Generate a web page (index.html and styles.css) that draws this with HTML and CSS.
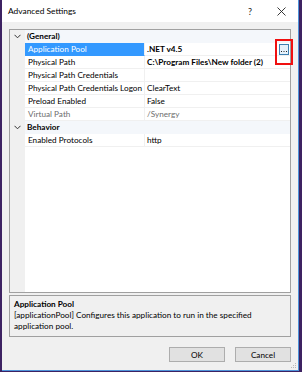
FILE: index.html
```html
<!DOCTYPE html>
<html lang="en">

<head>
  <meta charset="UTF-8">
  <meta name="viewport" content="width=device-width, initial-scale=1.0">
  <title>Advanced Settings</title>

  <link rel="stylesheet" href="styles.css">
</head>

<body>
  <div class="frame">
    <div class="dialog">
      <!-- title bar -->
      <div class="titlebar">
        <span class="title">Advanced Settings</span>
        <span class="tb-btn help">?</span>
        <span class="tb-btn close">
          <svg width="9" height="9" viewBox="0 0 9 9">
            <path d="M0.5 0.5 L8.5 8.5 M8.5 0.5 L0.5 8.5" stroke="#222" stroke-width="0.9" fill="none" />
          </svg>
        </span>
      </div>

      <div class="content">
        <!-- property grid -->
        <div class="grid">
          <div class="row category">
            <div class="gutter">
              <svg width="7" height="5" viewBox="0 0 7 5">
                <polyline points="0.5,0.8 3.5,3.8 6.5,0.8" stroke="#333" stroke-width="1" fill="none" />
              </svg>
            </div>
            <div class="cat-name">(General)</div>
          </div>
          <div class="row">
            <div class="gutter"></div>
            <div class="name selected">Application Pool</div>
            <div class="value">
              <span class="val-text bold">.NET v4.5</span>
              <span class="dots">
                <svg width="8" height="9" viewBox="0 0 8 9">
                  <rect x="1" y="6" width="1" height="1" fill="#222" />
                  <rect x="3.5" y="6" width="1" height="1" fill="#222" />
                  <rect x="6" y="6" width="1" height="1" fill="#222" />
                </svg>
              </span>
            </div>
          </div>
          <div class="row">
            <div class="gutter"></div>
            <div class="name">Physical Path</div>
            <div class="value"><span class="val-text bold">C:\Program Files\New folder (2)</span></div>
          </div>
          <div class="row">
            <div class="gutter"></div>
            <div class="name">Physical Path Credentials</div>
            <div class="value"><span class="val-text"></span></div>
          </div>
          <div class="row">
            <div class="gutter"></div>
            <div class="name">Physical Path Credentials Logon</div>
            <div class="value"><span class="val-text">ClearText</span></div>
          </div>
          <div class="row">
            <div class="gutter"></div>
            <div class="name">Preload Enabled</div>
            <div class="value"><span class="val-text">False</span></div>
          </div>
          <div class="row readonly">
            <div class="gutter"></div>
            <div class="name">Virtual Path</div>
            <div class="value"><span class="val-text">/Synergy</span></div>
          </div>
          <div class="row category">
            <div class="gutter">
              <svg width="7" height="5" viewBox="0 0 7 5">
                <polyline points="0.5,0.8 3.5,3.8 6.5,0.8" stroke="#333" stroke-width="1" fill="none" />
              </svg>
            </div>
            <div class="cat-name">Behavior</div>
          </div>
          <div class="row">
            <div class="gutter"></div>
            <div class="name">Enabled Protocols</div>
            <div class="value"><span class="val-text">http</span></div>
          </div>
          <div class="filler">
            <div class="gutter"></div>
          </div>
        </div>

        <!-- description -->
        <div class="desc">
          <div class="desc-title">Application Pool</div>
          <div class="desc-text">[applicationPool] Configures this application to run in the specified application pool.</div>
        </div>

        <div class="buttons">
          <button class="btn">OK</button>
          <button class="btn">Cancel</button>
        </div>
      </div>

      <svg class="grip" width="7" height="7" viewBox="0 0 7 7">
        <rect x="5" y="1" width="1" height="1" fill="#b8b8b8" />
        <rect x="3" y="3" width="1" height="1" fill="#b8b8b8" />
        <rect x="5" y="3" width="1" height="1" fill="#b8b8b8" />
        <rect x="1" y="5" width="1" height="1" fill="#b8b8b8" />
        <rect x="3" y="5" width="1" height="1" fill="#b8b8b8" />
        <rect x="5" y="5" width="1" height="1" fill="#b8b8b8" />
      </svg>
    </div>

    <!-- annotation -->
    <div class="highlight-box"></div>
  </div>
</body>

</html>
```

FILE: styles.css
```css
* {
  box-sizing: border-box;
}

body {
  margin: 0;
  font-family: Lato, "Noto Sans", sans-serif;
  font-size: 8.2px;
  color: #000;
}

.frame {
  position: relative;
  width: 302px;
  height: 372px;
  border-style: solid;
  border-color: #3d2262;
  border-width: 0 3px 1px 2px;
}

.dialog {
  position: relative;
  height: 100%;
  display: flex;
  flex-direction: column;
  background-color: #f0f0f0;
  border-right: 1px solid #4f93da;
  border-bottom: 1px solid #4f93da;
}

.titlebar {
  height: 22px;
  display: flex;
  align-items: center;
  background-color: #fff;
}

.title {
  flex: 1;
  padding-left: 6px;
  font-size: 8.4px;
}

.tb-btn {
  width: 32px;
  display: flex;
  justify-content: center;
  align-items: center;
  font-size: 9px;
  color: #222;
}

.close {
  padding-right: 2px;
}

.content {
  flex: 1;
  display: flex;
  flex-direction: column;
  padding: 7px 7px 0 7px;
}

/* property grid */
.grid {
  height: 264px;
  display: flex;
  flex-direction: column;
  background-color: #fff;
  border: 1px solid #a0a0a0;
}

.row {
  height: 13px;
  display: flex;
}

.gutter {
  width: 15px;
  flex-shrink: 0;
  display: flex;
  justify-content: center;
  align-items: center;
  background-color: #f0f0f0;
}

.category {
  background-color: #f4f7fb;
}

.cat-name {
  flex: 1;
  padding-left: 2px;
  line-height: 13px;
  font-weight: bold;
}

.name {
  width: 120px;
  flex-shrink: 0;
  padding-left: 3px;
  line-height: 12px;
  white-space: nowrap;
  overflow: hidden;
  border-bottom: 1px solid #f0f0f0;
  border-right: 1px solid #f0f0f0;
}

.name.selected {
  background-color: #3399ff;
  color: #fff;
  border-bottom-color: #3399ff;
}

.value {
  flex: 1;
  display: flex;
  align-items: center;
  padding-left: 2px;
  border-bottom: 1px solid #f0f0f0;
}

.val-text {
  flex: 1;
  line-height: 12px;
  white-space: nowrap;
}

.bold {
  font-weight: bold;
}

.readonly .name,
.readonly .value {
  color: #6d6d6d;
}

.dots {
  width: 10px;
  height: 11px;
  margin-right: 1px;
  display: flex;
  justify-content: center;
  align-items: center;
  background-color: #e5f1fb;
  border: 1px solid #3c7fb1;
}

.filler {
  flex: 1;
  display: flex;
}

/* description */
.desc {
  height: 42px;
  margin-top: 2px;
  padding: 3px 4px;
  border: 1px solid #a0a0a0;
}

.desc-title {
  font-weight: bold;
  line-height: 11px;
}

.desc-text {
  line-height: 11px;
}

.buttons {
  display: flex;
  justify-content: flex-end;
  gap: 10px;
  margin-top: 10px;
}

.btn {
  width: 56px;
  height: 15px;
  padding: 0;
  font-family: inherit;
  font-size: 8.2px;
  color: #000;
  background-color: #e1e1e1;
  border: 1px solid #adadad;
}

.grip {
  position: absolute;
  right: 1px;
  bottom: 1px;
}

/* red annotation rectangle */
.highlight-box {
  position: absolute;
  left: 273px;
  top: 39px;
  width: 18px;
  height: 26px;
  border: 2px solid #f01010;
}
```
